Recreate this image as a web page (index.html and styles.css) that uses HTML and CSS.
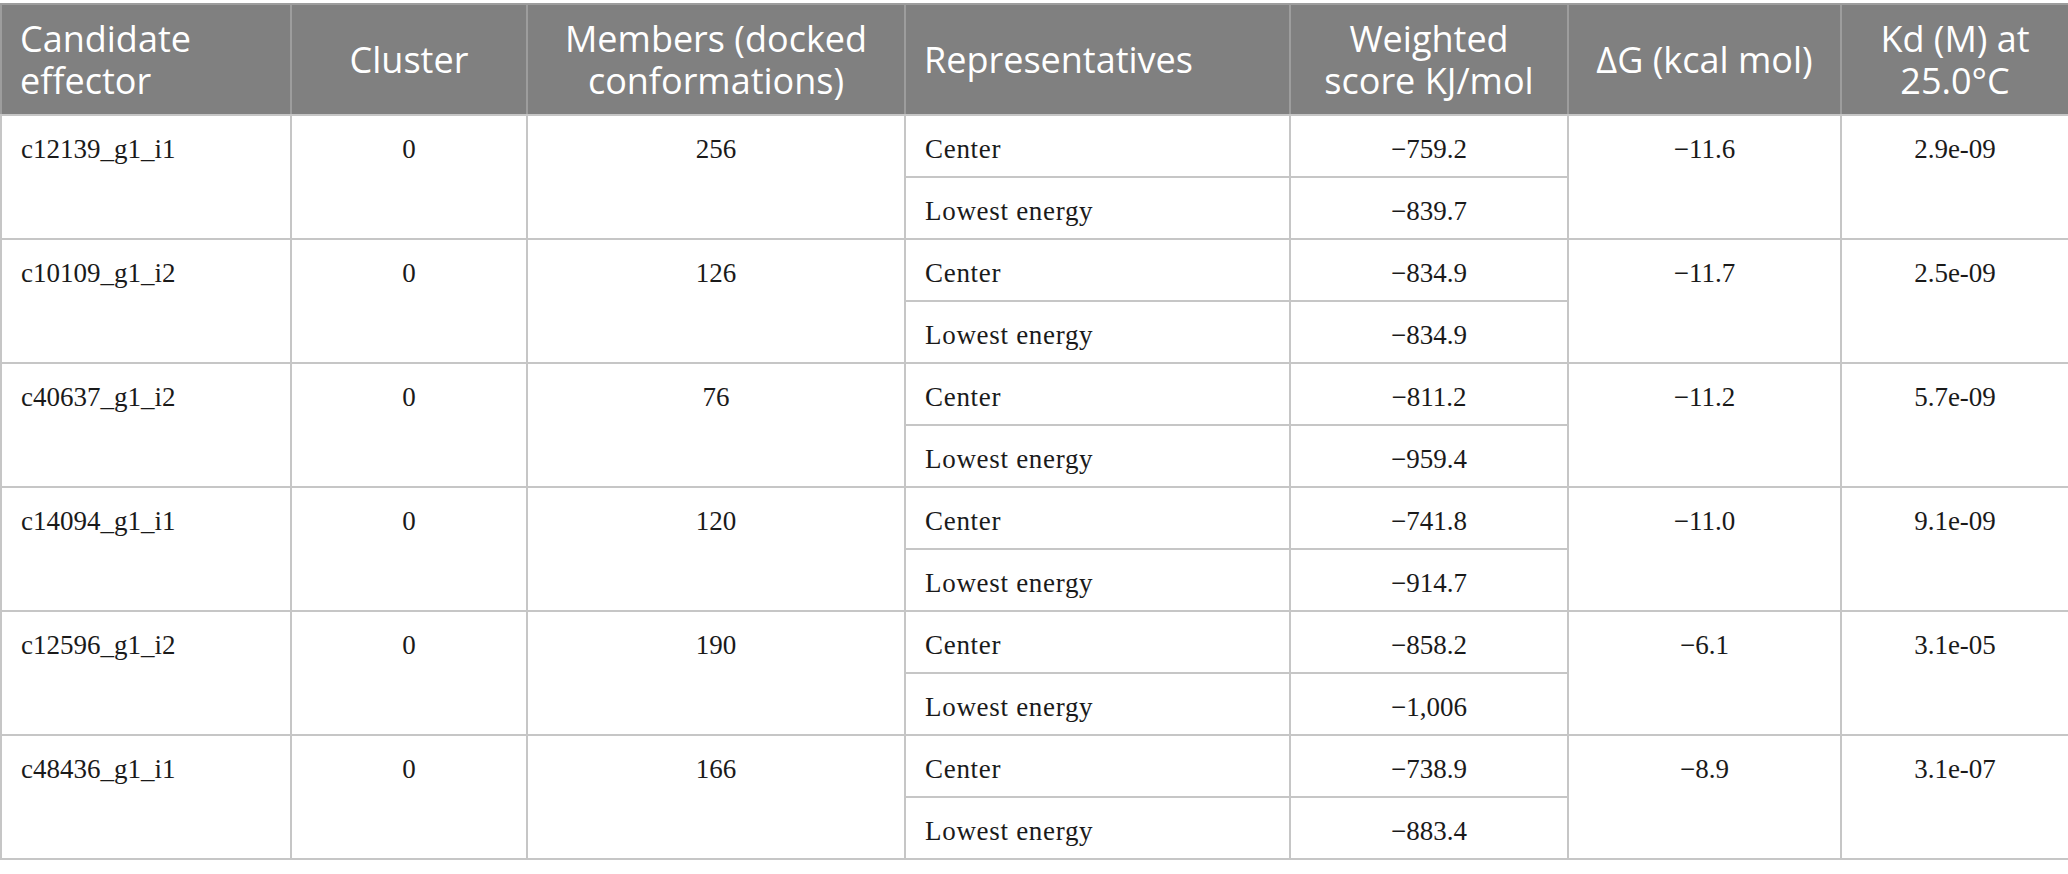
FILE: index.html
```html
<!DOCTYPE html>
<html lang="en">
<head>
    <meta charset="UTF-8">
    <meta name="viewport" content="width=device-width, initial-scale=1.0">
    <title>Docking results</title>
    <link rel="stylesheet" href="styles.css">
</head>
<body>
    <table class="dock-table">
        <colgroup>
            <col class="c-effector">
            <col class="c-cluster">
            <col class="c-members">
            <col class="c-rep">
            <col class="c-score">
            <col class="c-dg">
            <col class="c-kd">
        </colgroup>
        <thead>
            <tr>
                <th class="left">Candidate<br>effector</th>
                <th>Cluster</th>
                <th>Members (docked<br>conformations)</th>
                <th class="left">Representatives</th>
                <th>Weighted<br>score KJ/mol</th>
                <th>ΔG (kcal mol)</th>
                <th>Kd (M) at<br>25.0°C</th>
            </tr>
        </thead>
        <tbody>
            <tr>
                <td rowspan="2">c12139_g1_i1</td>
                <td rowspan="2" class="num">0</td>
                <td rowspan="2" class="num">256</td>
                <td class="rep">Center</td>
                <td class="num">−759.2</td>
                <td rowspan="2" class="num">−11.6</td>
                <td rowspan="2" class="num">2.9e-09</td>
            </tr>
            <tr>
                <td class="rep">Lowest energy</td>
                <td class="num">−839.7</td>
            </tr>
            <tr>
                <td rowspan="2">c10109_g1_i2</td>
                <td rowspan="2" class="num">0</td>
                <td rowspan="2" class="num">126</td>
                <td class="rep">Center</td>
                <td class="num">−834.9</td>
                <td rowspan="2" class="num">−11.7</td>
                <td rowspan="2" class="num">2.5e-09</td>
            </tr>
            <tr>
                <td class="rep">Lowest energy</td>
                <td class="num">−834.9</td>
            </tr>
            <tr>
                <td rowspan="2">c40637_g1_i2</td>
                <td rowspan="2" class="num">0</td>
                <td rowspan="2" class="num">76</td>
                <td class="rep">Center</td>
                <td class="num">−811.2</td>
                <td rowspan="2" class="num">−11.2</td>
                <td rowspan="2" class="num">5.7e-09</td>
            </tr>
            <tr>
                <td class="rep">Lowest energy</td>
                <td class="num">−959.4</td>
            </tr>
            <tr>
                <td rowspan="2">c14094_g1_i1</td>
                <td rowspan="2" class="num">0</td>
                <td rowspan="2" class="num">120</td>
                <td class="rep">Center</td>
                <td class="num">−741.8</td>
                <td rowspan="2" class="num">−11.0</td>
                <td rowspan="2" class="num">9.1e-09</td>
            </tr>
            <tr>
                <td class="rep">Lowest energy</td>
                <td class="num">−914.7</td>
            </tr>
            <tr>
                <td rowspan="2">c12596_g1_i2</td>
                <td rowspan="2" class="num">0</td>
                <td rowspan="2" class="num">190</td>
                <td class="rep">Center</td>
                <td class="num">−858.2</td>
                <td rowspan="2" class="num">−6.1</td>
                <td rowspan="2" class="num">3.1e-05</td>
            </tr>
            <tr>
                <td class="rep">Lowest energy</td>
                <td class="num">−1,006</td>
            </tr>
            <tr>
                <td rowspan="2">c48436_g1_i1</td>
                <td rowspan="2" class="num">0</td>
                <td rowspan="2" class="num">166</td>
                <td class="rep">Center</td>
                <td class="num">−738.9</td>
                <td rowspan="2" class="num">−8.9</td>
                <td rowspan="2" class="num">3.1e-07</td>
            </tr>
            <tr>
                <td class="rep">Lowest energy</td>
                <td class="num">−883.4</td>
            </tr>
        </tbody>
    </table>
</body>
</html>
```

FILE: styles.css
```css
body {
    margin: 0;
    padding-top: 3px;
    background-color: white;
}

.dock-table {
    width: 2068px;
    border-collapse: collapse;
    table-layout: fixed;
    border: 2px solid #c6c6c6;
}

.c-effector { width: 290px; }
.c-cluster { width: 236px; }
.c-members { width: 378px; }
.c-rep { width: 385px; }
.c-score { width: 278px; }
.c-dg { width: 273px; }
.c-kd { width: 228px; }

th {
    height: 109px;
    padding: 0 18px;
    background-color: #808080;
    color: white;
    font-family: "Open Sans", sans-serif;
    font-weight: 400;
    font-size: 36px;
    line-height: 42px;
    text-align: center;
    vertical-align: middle;
    white-space: nowrap;
    border: 2px solid #9d9d9d;
    border-bottom-color: #c6c6c6;
}

th.left {
    text-align: left;
}

td {
    height: 54px;
    padding: 6px 19px 0;
    font-family: "Liberation Serif", "Times New Roman", serif;
    font-size: 27px;
    line-height: 54px;
    color: #1a1a1a;
    text-align: left;
    vertical-align: top;
    border: 2px solid #c6c6c6;
}

td.num {
    text-align: center;
}

td.rep {
    letter-spacing: 0.7px;
}
```
